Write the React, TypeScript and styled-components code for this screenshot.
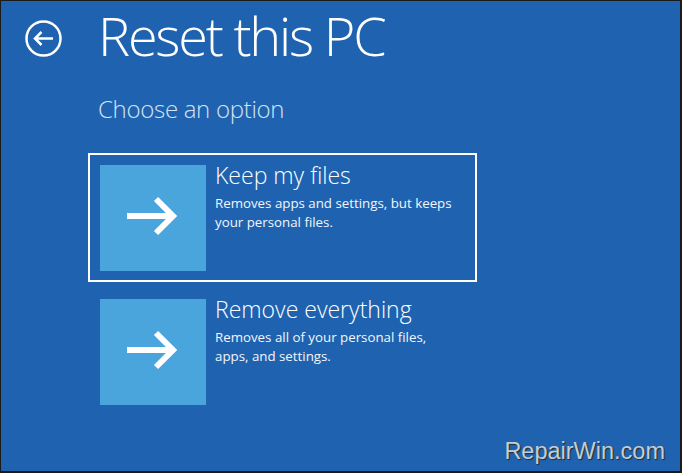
import * as React from "react";
import styled, { createGlobalStyle } from "styled-components";

const GlobalStyle = createGlobalStyle`
    html, body {
        margin: 0;
        padding: 0;
        background: #1a1a1a;
    }
    * {
        box-sizing: border-box;
    }
`;

const Screen = styled.div`
    position: relative;
    width: 682px;
    height: 473px;
    background: #1f63b0;
    border: 1px solid #1b1b1b;
    border-right-width: 2px;
    border-bottom-width: 2px;
    font-family: "Open Sans", "Noto Sans", sans-serif;
    color: #ffffff;
    overflow: hidden;
`;

const Header = styled.div`
    display: flex;
    align-items: flex-start;
    padding-left: 24px;
`;

const BackButton = styled.svg`
    width: 37px;
    height: 37px;
    flex: none;
    margin: 19px 36px 0 0;
`;

const Title = styled.h1`
    margin: 0;
    font-size: 54px;
    font-weight: 300;
    line-height: 68px;
    letter-spacing: -2.2px;
`;

const Content = styled.div`
    padding-left: 87px;
`;

const Subtitle = styled.h2`
    margin: 24px 0 0 10px;
    font-size: 24px;
    font-weight: 300;
    line-height: 32px;
    letter-spacing: -0.3px;
    color: #d3e2f4;
`;

const Options = styled.div`
    display: flex;
    flex-direction: column;
    gap: 5px;
    margin-top: 28px;
`;

const Option = styled.div<{ $selected?: boolean }>`
    display: flex;
    gap: 9px;
    width: 389px;
    height: 129px;
    padding: 10px;
    border: 2px solid ${({ $selected }) => ($selected ? "#ffffff" : "transparent")};
`;

const Tile = styled.div`
    display: grid;
    place-items: center;
    width: 106px;
    height: 106px;
    flex: none;
    background: #4aa5dc;
`;

const OptionText = styled.div`
    display: flex;
    flex-direction: column;
`;

const OptionTitle = styled.div`
    font-size: 23px;
    font-weight: 300;
    line-height: 30px;
    margin-top: -5px;
`;

const OptionDesc = styled.div`
    margin-top: 4px;
    font-size: 13.3px;
    font-weight: 400;
    line-height: 19px;
    color: #f2f6fb;
    max-width: 242px;
`;

const Watermark = styled.div`
    position: absolute;
    right: 15px;
    bottom: 6px;
    font-family: "Liberation Sans", Arial, sans-serif;
    font-size: 23.5px;
    color: #c5ccd6;
    text-shadow: 1px 1px 1px #2a2a2a;
`;

const Arrow = () => (
    <svg width="106" height="106" viewBox="0 0 106 106">
        <path
            d="M27 51 H71 M56 34 L73 51 L56 68"
            fill="none"
            stroke="#ffffff"
            strokeWidth="6"
            strokeLinejoin="miter"
        />
    </svg>
);

const options = [
    {
        title: "Keep my files",
        desc: "Removes apps and settings, but keeps your personal files.",
        selected: true,
    },
    {
        title: "Remove everything",
        desc: "Removes all of your personal files, apps, and settings.",
        selected: false,
    },
];

export default function App() {
    return (
        <>
            <GlobalStyle />
            <Screen>
                <Header>
                    <BackButton viewBox="0 0 37 37">
                        <circle
                            cx="18.5"
                            cy="18.5"
                            r="17"
                            fill="none"
                            stroke="#ffffff"
                            strokeWidth="2.5"
                        />
                        <path
                            d="M10 18.5 H28 M16.5 12 L10 18.5 L16.5 25"
                            fill="none"
                            stroke="#ffffff"
                            strokeWidth="2.5"
                        />
                    </BackButton>
                    <Title>Reset this PC</Title>
                </Header>
                <Content>
                    <Subtitle>Choose an option</Subtitle>
                    <Options>
                        {options.map((o) => (
                            <Option key={o.title} $selected={o.selected}>
                                <Tile>
                                    <Arrow />
                                </Tile>
                                <OptionText>
                                    <OptionTitle>{o.title}</OptionTitle>
                                    <OptionDesc>{o.desc}</OptionDesc>
                                </OptionText>
                            </Option>
                        ))}
                    </Options>
                </Content>
                <Watermark>RepairWin.com</Watermark>
            </Screen>
        </>
    );
}
